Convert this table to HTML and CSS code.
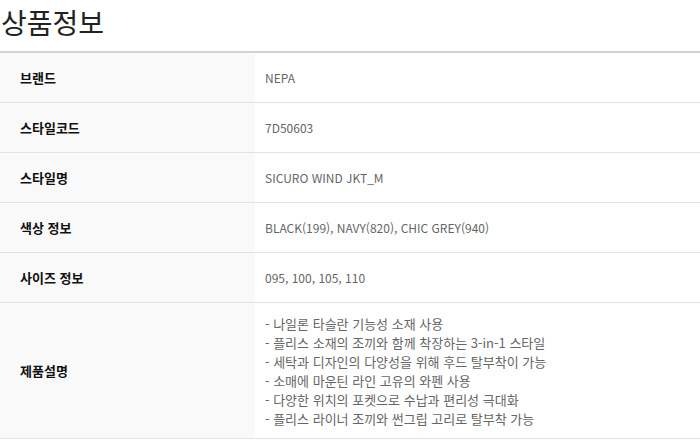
FILE: index.html
```html
<!DOCTYPE html>
<html lang="ko">
<head>
<meta charset="utf-8">
<link rel="stylesheet" href="styles.css">
</head>
<body>
<h1 class="title">상품정보</h1>
<table class="info">
  <tr><th>브랜드</th><td>NEPA</td></tr>
  <tr><th>스타일코드</th><td>7D50603</td></tr>
  <tr><th>스타일명</th><td>SICURO WIND JKT_M</td></tr>
  <tr><th>색상 정보</th><td>BLACK(199), NAVY(820), CHIC GREY(940)</td></tr>
  <tr><th>사이즈 정보</th><td>095, 100, 105, 110</td></tr>
  <tr class="desc"><th>제품설명</th><td>
    <ul class="lines">
      <li>- 나일론 타슬란 기능성 소재 사용</li>
      <li>- 플리스 소재의 조끼와 함께 착장하는 3-in-1 스타일</li>
      <li>- 세탁과 디자인의 다양성을 위해 후드 탈부착이 가능</li>
      <li>- 소매에 마운틴 라인 고유의 와펜 사용</li>
      <li>- 다양한 위치의 포켓으로 수납과 편리성 극대화</li>
      <li>- 플리스 라이너 조끼와 썬그립 고리로 탈부착 가능</li>
    </ul>
  </td></tr>
</table>
</body>
</html>
```

FILE: styles.css
```css
html, body {
  margin: 0;
  padding: 0;
  background: #fff;
  font-family: "Noto Sans CJK KR", "Noto Sans", sans-serif;
}
.title {
  margin: 0;
  height: 51px;
  line-height: 44px;
  font-size: 28px;
  font-weight: 400;
  color: #222;
  padding-left: 1px;
  box-sizing: border-box;
}
.info {
  width: 100%;
  border-collapse: collapse;
  border-top: 2px solid #d2d2d2;
}
.info tr {
  border-bottom: 1px solid #e3e3e3;
}
.info th {
  width: 235px;
  height: 49px;
  padding: 0 0 0 20px;
  background: #f9f9f9;
  text-align: left;
  font-size: 13px;
  font-weight: 700;
  color: #111;
  vertical-align: middle;
}
.info td {
  padding: 0 0 0 10px;
  font-size: 12px;
  color: #666;
  vertical-align: middle;
}
.desc th {
  height: 135px;
}
.lines {
  list-style: none;
  margin: 0;
  padding: 0;
  font-size: 13px;
}
.lines li {
  line-height: 19px;
}
```
